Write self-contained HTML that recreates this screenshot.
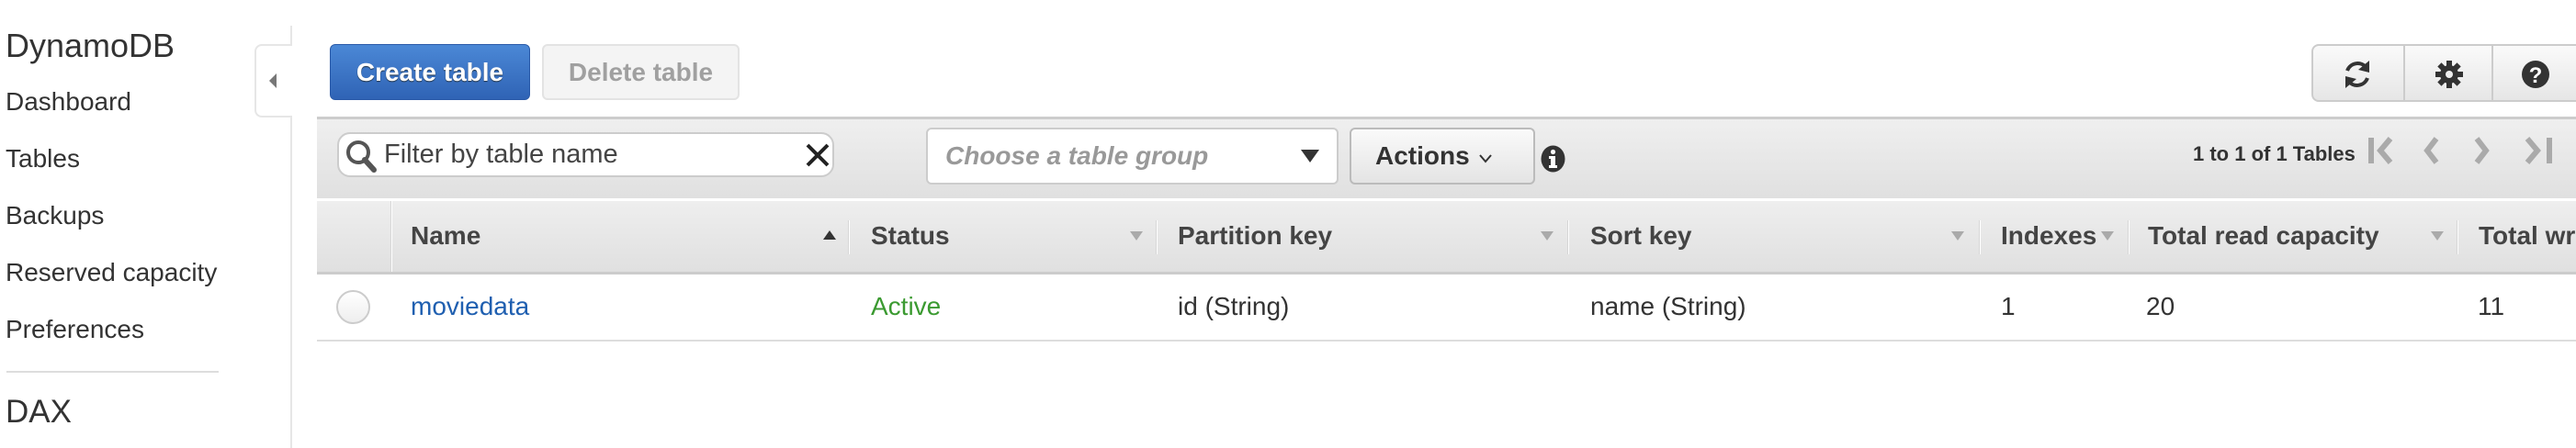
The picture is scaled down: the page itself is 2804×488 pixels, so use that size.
<!DOCTYPE html>
<html><head><meta charset="utf-8"><style>
*{margin:0;padding:0;box-sizing:border-box}
html,body{width:2804px;height:488px;overflow:hidden}
body{background:#fff;font-family:"Liberation Sans",Arial,sans-serif;color:#333}
#w{position:relative;width:2804px;height:488px;overflow:hidden}
.a{position:absolute;white-space:nowrap}
.nav{font-size:28px;left:6px;color:#333;line-height:1}
.hd{font-size:28px;font-weight:bold;color:#444;top:243px;line-height:1}
.sep{position:absolute;top:240px;width:2px;height:37px;background:#fff;border-left:1px solid #d6d6d6}
.dn{position:absolute;top:252px;width:0;height:0;border-left:7px solid transparent;border-right:7px solid transparent;border-top:10px solid #aaa}
.cell{font-size:28px;top:320px;line-height:1}
</style></head><body><div id="w">
<div class="a" style="left:6px;top:32px;font-size:36px;line-height:1;color:#333">DynamoDB</div>
<div class="a nav" style="top:97px">Dashboard</div>
<div class="a nav" style="top:159px">Tables</div>
<div class="a nav" style="top:221px">Backups</div>
<div class="a nav" style="top:283px">Reserved capacity</div>
<div class="a nav" style="top:345px">Preferences</div>
<div class="a" style="left:7px;top:404px;width:231px;height:2px;background:#ddd"></div>
<div class="a" style="left:6px;top:431px;font-size:35px;line-height:1">DAX</div>
<div class="a" style="left:316px;top:28px;width:2px;height:460px;background:#e6e6e6"></div>
<div class="a" style="left:277px;top:48px;width:41px;height:80px;background:#fff;border:2px solid #e6e6e6;border-right:none;border-radius:8px 0 0 8px"></div>
<div class="a" style="left:293px;top:80px;width:0;height:0;border-top:8px solid transparent;border-bottom:8px solid transparent;border-right:8px solid #777"></div>

<div class="a" style="left:359px;top:48px;width:218px;height:61px;border-radius:6px;background:linear-gradient(#4b88d6,#2f63b5);border:1px solid #2a5aa8;color:#fff;font-weight:bold;font-size:28px;text-align:center;line-height:59px;text-shadow:0 1px 1px #234">Create table</div>
<div class="a" style="left:590px;top:48px;width:215px;height:61px;border-radius:6px;background:#f4f4f4;border:2px solid #e3e3e3;color:#a0a0a0;font-weight:bold;font-size:28px;text-align:center;line-height:57px">Delete table</div>

<div class="a" style="left:2516px;top:48px;width:300px;height:63px;border:2px solid #ccc;border-radius:8px;background:linear-gradient(#fafafa,#e6e6e6)"></div>
<div class="a" style="left:2616px;top:50px;width:2px;height:59px;background:#ccc"></div>
<div class="a" style="left:2712px;top:50px;width:2px;height:59px;background:#ccc"></div>
<svg class="a" style="left:2545px;top:60px" width="42" height="42" viewBox="0 0 42 42"><path d="M10 17 A12 12 0 0 1 31 14" fill="none" stroke="#333" stroke-width="4"/><path d="M34 6 L34 19 L22 16 Z" fill="#333"/><path d="M32 25 A12 12 0 0 1 11 28" fill="none" stroke="#333" stroke-width="4"/><path d="M8 36 L8 23 L20 26 Z" fill="#333"/></svg>
<svg class="a" style="left:2649px;top:64px" width="34" height="34" viewBox="0 0 34 34"><g fill="#333"><circle cx="17" cy="17" r="10"/><rect x="14" y="2" width="6" height="30"/><rect x="2" y="14" width="30" height="6"/><rect x="14" y="2" width="6" height="30" transform="rotate(45 17 17)"/><rect x="14" y="2" width="6" height="30" transform="rotate(-45 17 17)"/></g><circle cx="17" cy="17" r="4" fill="#eee"/></svg>
<svg class="a" style="left:2743px;top:64px" width="34" height="34" viewBox="0 0 34 34"><circle cx="17" cy="17" r="15" fill="#333"/><text x="17" y="26" font-family="Liberation Sans" font-weight="bold" font-size="24" fill="#fff" text-anchor="middle">?</text></svg>

<div class="a" style="left:345px;top:127px;width:2460px;height:89px;background:linear-gradient(#efefef,#e0e0e0);border-top:3px solid #ccc"></div>
<div class="a" style="left:367px;top:144px;width:541px;height:49px;background:#fff;border:2px solid #ccc;border-radius:14px"></div>
<svg class="a" style="left:374px;top:150px" width="40" height="40" viewBox="0 0 40 40"><circle cx="16" cy="16" r="11" fill="none" stroke="#555" stroke-width="4"/><path d="M23 24 L33 35" stroke="#555" stroke-width="6" stroke-linecap="round"/></svg>
<div class="a" style="left:418px;top:154px;font-size:29px;color:#444;line-height:1">Filter by table name</div>
<svg class="a" style="left:876px;top:155px" width="28" height="28" viewBox="0 0 28 28"><path d="M3 3 L25 25 M25 3 L3 25" stroke="#222" stroke-width="4"/></svg>
<div class="a" style="left:1008px;top:139px;width:449px;height:62px;background:#fff;border:2px solid #ccc;border-radius:6px"></div>
<div class="a" style="left:1029px;top:156px;font-size:28px;font-weight:bold;font-style:italic;color:#999;line-height:1">Choose a table group</div>
<div class="a" style="left:1416px;top:163px;width:0;height:0;border-left:10px solid transparent;border-right:10px solid transparent;border-top:14px solid #333"></div>
<div class="a" style="left:1469px;top:139px;width:202px;height:62px;border:2px solid #bbb;border-radius:6px;background:linear-gradient(#fafafa,#e4e4e4)"></div>
<div class="a" style="left:1497px;top:156px;font-size:28px;font-weight:bold;color:#333;line-height:1">Actions</div>
<svg class="a" style="left:1609px;top:167px" width="16" height="12" viewBox="0 0 16 12"><path d="M2 2 L8 9 L14 2" fill="none" stroke="#333" stroke-width="2"/></svg>
<svg class="a" style="left:1677px;top:158px" width="27" height="30" viewBox="0 0 27 30"><ellipse cx="13.5" cy="15" rx="13" ry="14.5" fill="#333"/><circle cx="13.5" cy="7.5" r="2.6" fill="#fff"/><path d="M9 12 H16 V22 H18 V25 H9 V22 H11 V15 H9 Z" fill="#fff"/></svg>
<div class="a" style="left:2387px;top:157px;font-size:22px;font-weight:bold;color:#333;line-height:1">1 to 1 of 1 Tables</div>
<svg class="a" style="left:2576px;top:148px" width="210" height="32" viewBox="0 0 210 32"><g fill="none" stroke="#aaa" stroke-width="6"><path d="M5 2 V30"/><path d="M26 3 L15 16 L26 29"/><path d="M76 3 L66 16 L76 29"/><path d="M120 3 L130 16 L120 29"/><path d="M175 3 L186 16 L175 29"/><path d="M199 2 V30"/></g></svg>

<div class="a" style="left:345px;top:216px;width:2460px;height:83px;background:linear-gradient(#eeeeee,#e0e0e0);border-top:3px solid #fff;border-bottom:3px solid #ccc"></div>
<div class="a" style="left:425px;top:219px;width:2px;height:77px;background:#fff;border-left:1px solid #d6d6d6"></div>
<div class="a hd" style="left:447px">Name</div>
<div class="a" style="left:896px;top:251px;width:0;height:0;border-left:7px solid transparent;border-right:7px solid transparent;border-bottom:10px solid #333"></div>
<div class="sep" style="left:923px"></div>
<div class="a hd" style="left:948px">Status</div>
<div class="dn" style="left:1230px"></div><div class="sep" style="left:1258px"></div>
<div class="a hd" style="left:1282px">Partition key</div>
<div class="dn" style="left:1677px"></div><div class="sep" style="left:1706px"></div>
<div class="a hd" style="left:1731px">Sort key</div>
<div class="dn" style="left:2124px"></div><div class="sep" style="left:2154px"></div>
<div class="a hd" style="left:2178px">Indexes</div>
<div class="dn" style="left:2287px"></div><div class="sep" style="left:2316px"></div>
<div class="a hd" style="left:2338px">Total read capacity</div>
<div class="dn" style="left:2646px"></div><div class="sep" style="left:2674px"></div>
<div class="a hd" style="left:2698px;width:106px;overflow:hidden">Total write capacity</div>

<div class="a" style="left:366px;top:316px;width:37px;height:37px;border-radius:50%;border:2px solid #ccc;background:linear-gradient(#fff,#eee)"></div>
<div class="a cell" style="left:447px;color:#1f5fb0">moviedata</div>
<div class="a cell" style="left:948px;color:#3b9a31">Active</div>
<div class="a cell" style="left:1282px">id (String)</div>
<div class="a cell" style="left:1731px">name (String)</div>
<div class="a cell" style="left:2178px">1</div>
<div class="a cell" style="left:2336px">20</div>
<div class="a cell" style="left:2697px">11</div>
<div class="a" style="left:345px;top:370px;width:2459px;height:2px;background:#ddd"></div>
</div></body></html>
